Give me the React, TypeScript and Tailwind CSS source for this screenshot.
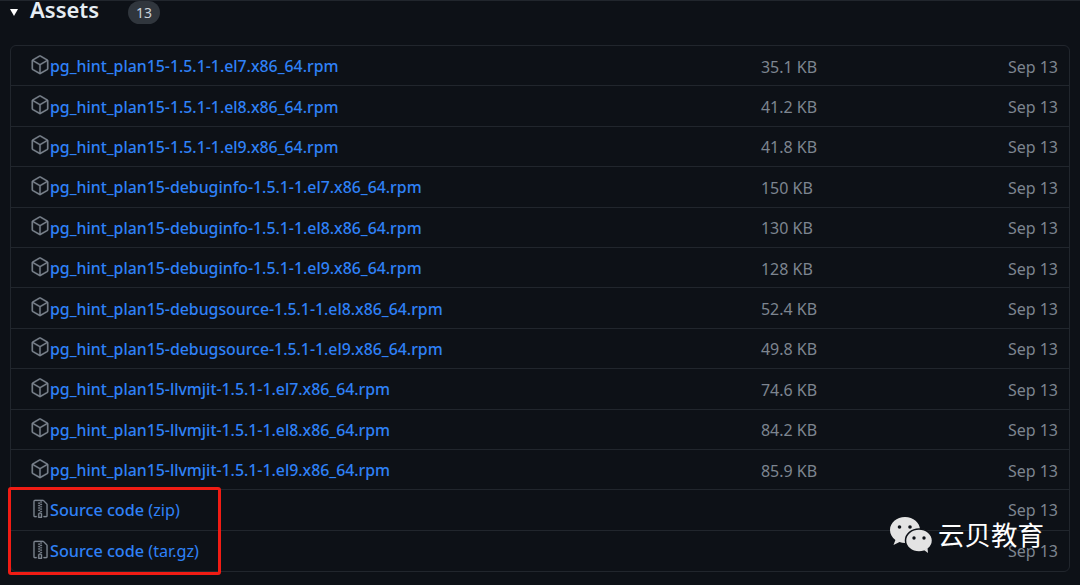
import { GoPackage, GoFileZip } from "react-icons/go";

const rows: [string, string][] = [
  ["pg_hint_plan15-1.5.1-1.el7.x86_64.rpm", "35.1 KB"],
  ["pg_hint_plan15-1.5.1-1.el8.x86_64.rpm", "41.2 KB"],
  ["pg_hint_plan15-1.5.1-1.el9.x86_64.rpm", "41.8 KB"],
  ["pg_hint_plan15-debuginfo-1.5.1-1.el7.x86_64.rpm", "150 KB"],
  ["pg_hint_plan15-debuginfo-1.5.1-1.el8.x86_64.rpm", "130 KB"],
  ["pg_hint_plan15-debuginfo-1.5.1-1.el9.x86_64.rpm", "128 KB"],
  ["pg_hint_plan15-debugsource-1.5.1-1.el8.x86_64.rpm", "52.4 KB"],
  ["pg_hint_plan15-debugsource-1.5.1-1.el9.x86_64.rpm", "49.8 KB"],
  ["pg_hint_plan15-llvmjit-1.5.1-1.el7.x86_64.rpm", "74.6 KB"],
  ["pg_hint_plan15-llvmjit-1.5.1-1.el8.x86_64.rpm", "84.2 KB"],
  ["pg_hint_plan15-llvmjit-1.5.1-1.el9.x86_64.rpm", "85.9 KB"],
];

function Row({ icon, children, size, last, source }: { icon: React.ReactNode; children: React.ReactNode; size?: string; last?: boolean; source?: boolean }) {
  return (
    <div className={`flex h-[40.4px] items-center pr-[11px] ${source ? "pl-5" : "pl-[19px] pt-[2px]"} ${last ? "" : "border-b border-[#21262d]"}`}>
      <div className="flex flex-1 items-center">
        <span className={`${source ? "w-[19px] mb-[2px]" : "w-[20px] mb-[4px]"} flex shrink-0 justify-start text-[#7d8590]`}>{icon}</span>
        <span className={`${source ? "text-[16.2px]" : "text-[15.85px] mt-[1px]"} font-medium text-[#2f81f7]`}>{children}</span>
      </div>
      <div className="w-[247px] text-[16px] text-[#7d8590]">{size}</div>
      <div className="text-[16px] text-[#7d8590]">Sep 13</div>
    </div>
  );
}

export default function App() {
  return (
    <div className="relative h-[585px] w-[1080px] overflow-hidden bg-[#0d1117] font-['Noto_Sans','Noto_Sans_CJK_SC',sans-serif]">
      <div className="h-px bg-[#21262d]" />
      <div className="flex h-[44px] items-start pl-[10px]">
        <svg width="8" height="7" viewBox="0 0 8 7" className="mt-[8px] text-white" fill="currentColor">
          <path d="M0 0h8L4 7z" />
        </svg>
        <span className="ml-[12px] mt-[-6px] text-[22px] leading-[28px] font-semibold text-[#e6edf3]">Assets</span>
        <span className="ml-[29px] flex h-[23px] w-[32px] items-center justify-center rounded-full bg-[#30363d] text-[14px] text-[#c9d1d9]">13</span>
      </div>
      <div className="mx-[10px] rounded-md border border-[#21262d]">
        {rows.map(([name, size]) => (
          <Row key={name} icon={<GoPackage size={20} strokeWidth={0.4} stroke="currentColor" />} size={size}>{name}</Row>
        ))}
        <Row source icon={<GoFileZip size={19} strokeWidth={0.3} stroke="currentColor" />}>
          Source code <span className="font-normal">(zip)</span>
        </Row>
        <Row source icon={<GoFileZip size={19} strokeWidth={0.3} stroke="currentColor" />} last>
          Source code <span className="font-normal">(tar.gz)</span>
        </Row>
      </div>
      <div className="absolute left-[8px] top-[487px] h-[88px] w-[213px] rounded-[3px] border-[3px] border-[#f01c14]" />
      <div className="absolute left-[889px] top-[516px] flex items-center">
        <svg width="44" height="38" viewBox="0 0 44 38">
          <path d="M16 1C7.700 1 1 6.800 1 14c0 4 2.100 7.500 5.400 9.900L4.500 29l6-3c1.700.600 3.600.900 5.500.900 8.300 0 15-5.800 15-13S24.300 1 16 1z" fill="#e3e3e3" />
          <ellipse cx="30" cy="24.500" rx="13.500" ry="11.500" fill="#e3e3e3" stroke="#0d1117" strokeWidth="1.500" />
          <path d="M35 34l4 3-.5-5z" fill="#e3e3e3" />
          <circle cx="10.500" cy="11" r="1.800" fill="#0d1117" />
          <circle cx="21" cy="11" r="1.800" fill="#0d1117" />
          <circle cx="25" cy="22" r="1.700" fill="#0d1117" />
          <circle cx="35" cy="22" r="1.700" fill="#0d1117" />
        </svg>
        <span className="ml-[5px] text-[26.500px] leading-none text-white">云贝教育</span>
      </div>
    </div>
  );
}
